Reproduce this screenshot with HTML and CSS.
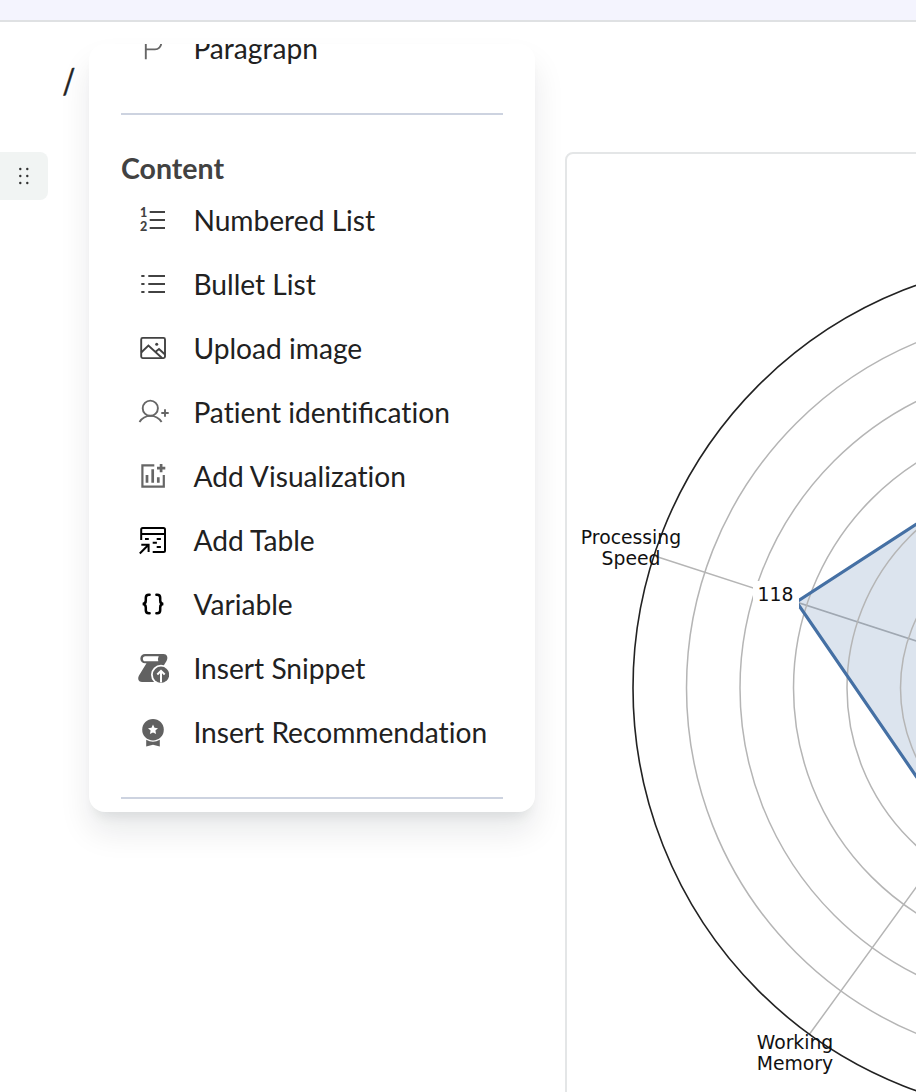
FILE: index.html
```html
<!DOCTYPE html>
<html lang="en">
<head>
    <meta charset="UTF-8">
    <meta name="viewport" content="width=device-width, initial-scale=1.0">
    <title>Report editor</title>
    <link rel="stylesheet" href="styles.css">
</head>
<body>

<header class="topbar"></header>

<main class="editor">
    <div class="gutter">
        <button class="drag-handle" aria-label="Drag block">
            <svg width="12" height="18" viewBox="0 0 12 18">
                <circle cx="2.3" cy="2" r="1.2"/><circle cx="9.3" cy="2" r="1.2"/>
                <circle cx="2.3" cy="9" r="1.2"/><circle cx="9.3" cy="9" r="1.2"/>
                <circle cx="2.3" cy="16" r="1.2"/><circle cx="9.3" cy="16" r="1.2"/>
            </svg>
        </button>
    </div>

    <div class="command-line"><span class="slash">/</span></div>

    <figure class="chart">
        <svg width="900" height="1000" viewBox="567 154 900 1000">
            <!-- grid -->
            <g class="spokes">
                <path d="M1061 688L654 555.8M1061 688L809.4 1034.3"/>
            </g>
            <path class="area" d="M1061 430L796.5 602L916 776L1061 987Z"/>
            <g class="rings">
                <circle cx="1061" cy="688" r="160.5"/>
                <circle cx="1061" cy="688" r="214"/>
                <circle cx="1061" cy="688" r="267.5"/>
                <circle cx="1061" cy="688" r="321"/>
                <circle cx="1061" cy="688" r="374.5"/>
            </g>
            <circle class="outer" cx="1061" cy="688" r="428"/>
            <path class="line" d="M1061 430L796.5 602L916 776L1061 987"/>
            <!-- labels -->
            <rect class="label-box" x="753" y="581" width="46" height="27"/>
            <g class="labels">
                <text x="775.5" y="601">118</text>
                <text x="631" y="543.5">Processing</text>
                <text x="631" y="564.5">Speed</text>
                <text x="795" y="1048.5">Working</text>
                <text x="795" y="1069.5">Memory</text>
            </g>
        </svg>
    </figure>

    <div class="menu">
        <ul class="menu-list menu-list-text">
            <li class="menu-item">
                <svg class="icon icon-gray" viewBox="0 0 32 32"><path d="M8.8 26.3V4H18a6.2 6.2 0 0 1 0 12.4H8.8"/></svg>
                <span>Paragraph</span>
            </li>
        </ul>
        <hr>
        <h2>Content</h2>
        <ul class="menu-list">
            <li class="menu-item">
                <svg class="icon" viewBox="0 0 32 32">
                    <path d="M12.7 7H28M12.7 15H28M12.7 23H28"/>
                    <text x="3" y="12.3">1</text><text x="3" y="25.7">2</text>
                </svg>
                <span>Numbered List</span>
            </li>
            <li class="menu-item">
                <svg class="icon" viewBox="0 0 32 32"><path d="M4.3 7h3.2M4.3 15h3.2M4.3 23h3.2M11.3 7H28M11.3 15H28M11.3 23H28"/></svg>
                <span>Bullet List</span>
            </li>
            <li class="menu-item">
                <svg class="icon" viewBox="0 0 32 32">
                    <rect x="4.2" y="4.9" width="23.8" height="20.2" rx="1.5"/>
                    <path d="M4.2 19.5L11.4 12.6L25 25M18.3 19L22 16L28 21.5"/>
                    <circle class="fill" cx="19.7" cy="11.3" r="1.5"/>
                </svg>
                <span>Upload image</span>
            </li>
            <li class="menu-item">
                <svg class="icon icon-gray" viewBox="0 0 32 32">
                    <circle cx="13.3" cy="11.2" r="7.6"/>
                    <path d="M2.5 25C5 21 9 18.9 13.5 18.9S22 21 24.6 25M28 12.3v7.4M24.3 16h7.4"/>
                </svg>
                <span>Patient identi<span class="liga">fi</span>cation</span>
            </li>
            <li class="menu-item">
                <svg class="icon icon-viz" viewBox="0 0 32 32">
                    <path d="M17.3 4.4H5.4V25.6H26.8V14"/>
                    <path class="bars" d="M10 14v7.7M15.7 8.3v13.4M21.3 16.3v5.4M24.1 3v8.3M20 7.1h8.3"/>
                </svg>
                <span>Add Visualization</span>
            </li>
            <li class="menu-item">
                <svg class="icon icon-black" viewBox="0 0 32 32">
                    <path d="M4.2 15V4.5Q4.2 3 5.7 3H26.5Q28 3 28 4.5V25.5Q28 27 26.5 27H15.7M4.2 9H28"/>
                    <path d="M8 14h3.8M19.7 14h4.2M15.7 17.8h4.2M19.7 22h4.2M2.8 28.5L11 20.3M4.3 19.8H11.6V27"/>
                </svg>
                <span>Add Table</span>
            </li>
            <li class="menu-item">
                <svg class="icon icon-braces" viewBox="0 0 32 32">
                    <path d="M12.6 5.8H11.8Q8.8 5.8 8.8 8.8V11.6Q8.8 15 5.6 15Q8.8 15 8.8 18.4V21.2Q8.8 24.2 11.8 24.2H12.6"/>
                    <path d="M19.4 5.8H20.2Q23.2 5.8 23.2 8.8V11.6Q23.2 15 26.4 15Q23.2 15 23.2 18.4V21.2Q23.2 24.2 20.2 24.2H19.4"/>
                </svg>
                <span>Variable</span>
            </li>
            <li class="menu-item">
                <svg class="icon icon-solid" viewBox="0 0 32 32">
                    <path d="M8 1H26.5C30 1 31.5 4.5 29.5 8L24 17V29H5C1.5 29 .3 25.5 2 22.5L9.5 10.3H8A4.6 4.6 0 0 1 8 1Z"/>
                    <path class="cut" d="M8.4 3.2H21.7Q20.5 5.5 21.3 8.3H8.4A2.5 2.5 0 0 1 8.4 3.2Z"/>
                    <circle class="cut" cx="24" cy="21.7" r="10"/>
                    <circle cx="24" cy="21.7" r="8.2"/>
                    <path class="arrow" d="M24 29.5V18M20.3 21.5L24 17.8L27.7 21.5"/>
                </svg>
                <span>Insert Snippet</span>
            </li>
            <li class="menu-item">
                <svg class="icon icon-solid" viewBox="0 0 32 32">
                    <circle cx="16" cy="12.7" r="10.8"/>
                    <path class="cut" d="M16 7.6L17.5 10.8L21 11.2L18.4 13.6L19.1 17.1L16 15.4L12.9 17.1L13.6 13.6L11 11.2L14.5 10.8Z"/>
                    <path d="M9.2 22.8Q16 26.6 22.8 22.8V29.6L16 27.7L9.2 29.6Z"/>
                </svg>
                <span>Insert Recommendation</span>
            </li>
        </ul>
        <hr>
    </div>
</main>

</body>
</html>
```

FILE: styles.css
```css
* {
    box-sizing: border-box;
}
body {
    margin: 0;
    height: 1092px;
    overflow: hidden;
    background: #fff;
    color: #212121;
    font-family: Lato, sans-serif;
}
.topbar {
    height: 22px;
    background: #f4f4fe;
    border-bottom: 2px solid #dfe1e3;
}
.editor {
    position: relative;
    display: grid;
    grid-template-columns: 48px 517px 902px;
    height: 1070px;
    overflow: hidden;
}
.gutter {
    padding-top: 130px;
}
.drag-handle {
    display: flex;
    align-items: center;
    justify-content: center;
    width: 48px;
    height: 48px;
    padding: 0;
    border: none;
    border-radius: 0 8px 8px 0;
    background: #f1f4f3;
    fill: #333;
}
.command-line {
    padding: 38px 0 0 13px;
    font-size: 35px;
    line-height: 40px;
}
.slash {
    display: inline-block;
    transform: scaleX(0.8);
    -webkit-text-stroke: 0.6px #212121;
}
.chart {
    margin: 130px 0 0;
    border: 2px solid #e4e6e7;
    border-radius: 8px;
    height: 1000px;
    overflow: hidden;
}
.chart svg {
    display: block;
}
.spokes, .rings {
    fill: none;
    stroke: #b5b5b5;
    stroke-width: 1.5;
}
.area {
    fill: #4570a4;
    fill-opacity: 0.19;
}
.outer {
    fill: none;
    stroke: #222;
    stroke-width: 1.6;
}
.line {
    fill: none;
    stroke: #4570a4;
    stroke-width: 3.2;
}
.label-box {
    fill: #fff;
}
.labels {
    font-family: "DejaVu Sans", sans-serif;
    font-size: 18.8px;
    text-anchor: middle;
    fill: #111;
}

/* slash menu */
.menu {
    position: absolute;
    top: 22px;
    left: 89px;
    width: 446px;
    height: 768px;
    padding: 0 32px;
    overflow: hidden;
    border-radius: 16px;
    background: #fff;
    box-shadow: 0 20px 32px rgba(12, 20, 28, 0.09), 0 10px 12px -6px rgba(12, 20, 28, 0.08);
}
.menu-list {
    margin: 0;
    padding: 0;
    list-style: none;
}
.menu-list-text {
    margin-top: -27px;
}
.menu-item {
    display: flex;
    align-items: center;
    gap: 24.4px;
    height: 64px;
    padding-left: 16px;
    font-size: 28.16px;
    line-height: 34px;
    white-space: nowrap;
    font-variant-ligatures: none;
}
.menu-item > span {
    padding-bottom: 2px;
}
.liga {
    font-variant-ligatures: normal;
}
.menu hr {
    height: 2px;
    margin: 32px 0 0;
    border: none;
    background: #cdd3e0;
}
.menu h2 {
    margin: 0;
    padding-top: 35px;
    height: 74px;
    font-size: 28.5px;
    line-height: 36px;
    font-weight: 700;
    color: #424242;
}
.icon {
    flex: none;
    width: 32px;
    height: 32px;
    fill: none;
    stroke: #424242;
    stroke-width: 1.9;
}
.icon text {
    font-size: 12.5px;
    font-weight: 900;
    fill: #424242;
    stroke: none;
}
.icon .fill {
    fill: #424242;
    stroke: none;
}
.icon-gray {
    stroke: #666;
}
.icon-viz {
    stroke: #666;
    stroke-width: 2.2;
}
.icon-viz .bars {
    stroke-width: 2.7;
}
.icon-black {
    stroke: #000;
    stroke-width: 2;
}
.icon-braces {
    stroke: #000;
    stroke-width: 2.5;
    stroke-linecap: round;
}
.icon-solid {
    fill: #616161;
    stroke: none;
}
.icon-solid .cut {
    fill: #fff;
}
.icon-solid .arrow {
    fill: none;
    stroke: #fff;
    stroke-width: 2;
}
```
